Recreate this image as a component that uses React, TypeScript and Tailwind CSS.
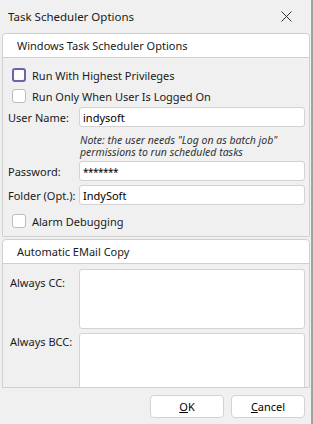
import React from 'react';

const font = { fontFamily: '"Noto Sans", "Open Sans", sans-serif' };

const CheckBox = ({ focused = false }: { focused?: boolean }) => (
    <div
        className={
            focused
                ? 'w-[14px] h-[14px] rounded-[3px] bg-white border-2 border-[#6f62a8] shrink-0'
                : 'w-[14px] h-[14px] rounded-[3px] bg-white border border-[#bdbdbd] shrink-0'
        }
    />
);

const Field = ({ value, small = false }: { value: string; small?: boolean }) => (
    <div
        className={
            small
                ? 'w-[226px] h-[20px] bg-white border border-[#d3d3d3] rounded-[3px] pl-[3px] pt-[2px] flex items-center text-[10px] tracking-[-0.5px] text-black leading-none'
                : 'w-[226px] h-[20px] bg-white border border-[#d3d3d3] rounded-[3px] pl-[3px] flex items-center text-[11px] text-black leading-none'
        }
    >
        {value}
    </div>
);

export default function App() {
    return (
        <div
            className="w-[313px] h-[424px] bg-[#f0f0f0] border-r-2 border-[#a3a3a3] flex flex-col text-[11px] leading-[15px] text-[#1a1a1a] overflow-hidden"
            style={font}
        >
            {/* title */}
            <div className="h-[33px] shrink-0 flex items-center justify-between pl-[8px] pr-[19px]">
                <span className="text-[11.5px]">Task Scheduler Options</span>
                <svg width="11" height="11" viewBox="0 0 11 11" className="text-[#333]">
                    <path d="M0.5 0.5L10.5 10.5M10.5 0.5L0.5 10.5" stroke="currentColor" strokeWidth="1" />
                </svg>
            </div>

            <div className="pl-[2px] pr-[1px] flex flex-col shrink-0">
                {/* Windows Task Scheduler Options */}
                <div className="border border-[#d0d0d0] rounded-t-[4px] flex flex-col">
                    <div className="h-[23px] bg-white rounded-t-[4px] border-b border-[#d0d0d0] pl-[14px] flex items-center box-content">
                        Windows Task Scheduler Options
                    </div>
                    <div className="flex flex-col pb-[8px]">
                        <div className="mt-[10px] h-[14px] flex items-center gap-[6px] pl-[9px]">
                            <CheckBox focused />
                            <span className="whitespace-nowrap">Run With Highest Privileges</span>
                        </div>
                        <div className="mt-[7px] h-[14px] flex items-center gap-[6px] pl-[9px]">
                            <CheckBox />
                            <span className="whitespace-nowrap">Run Only When User Is Logged On</span>
                        </div>
                        <div className="mt-[4px] h-[20px] flex items-center pl-[5px]">
                            <span className="w-[71px] whitespace-nowrap">User Name:</span>
                            <Field value="indysoft" />
                        </div>
                        <div className="mt-[7px] h-[24px] pl-[77px] italic text-[10.5px] text-[#333] flex flex-col">
                            <span className="h-[12px] leading-[12px] whitespace-nowrap">Note: the user needs "Log on as batch job"</span>
                            <span className="h-[12px] leading-[12px] whitespace-nowrap">permissions to run scheduled tasks</span>
                        </div>
                        <div className="mt-[3px] h-[20px] flex items-center pl-[5px]">
                            <span className="w-[71px] whitespace-nowrap">Password:</span>
                            <Field value="*******" small />
                        </div>
                        <div className="mt-[4px] h-[20px] flex items-center pl-[5px]">
                            <span className="w-[71px] whitespace-nowrap">Folder (Opt.):</span>
                            <Field value="IndySoft" />
                        </div>
                        <div className="mt-[9px] h-[14px] flex items-center gap-[6px] pl-[9px]">
                            <CheckBox />
                            <span className="whitespace-nowrap">Alarm Debugging</span>
                        </div>
                    </div>
                </div>

                {/* Automatic EMail Copy */}
                <div className="mt-[2px] h-[149px] border border-[#d0d0d0] rounded-t-[4px] flex flex-col overflow-hidden">
                    <div className="h-[23px] bg-white rounded-t-[4px] border-b border-[#d0d0d0] pl-[14px] flex items-center box-content shrink-0">
                        Automatic EMail Copy
                    </div>
                    <div className="flex flex-col pl-[7px]">
                        <div className="mt-[5px] flex items-start">
                            <span className="w-[69px] pt-[6px] whitespace-nowrap">Always CC:</span>
                            <div className="w-[226px] h-[60px] bg-white border border-[#d3d3d3] rounded-[3px]" />
                        </div>
                        <div className="mt-[4px] flex items-start">
                            <span className="w-[69px] pt-[1px] whitespace-nowrap">Always BCC:</span>
                            <div className="w-[226px] h-[80px] bg-white border border-[#d3d3d3] rounded-[3px] shrink-0" />
                        </div>
                    </div>
                </div>
            </div>

            {/* buttons */}
            <div className="mt-[7px] shrink-0 flex justify-end gap-[7px] pr-[6px]">
                <button className="w-[74px] h-[23px] bg-white border border-[#d3d3d3] rounded-[4px] text-[11px] text-black">
                    <u>O</u>K
                </button>
                <button className="w-[74px] h-[23px] bg-white border border-[#d3d3d3] rounded-[4px] text-[11px] text-black">
                    <u>C</u>ancel
                </button>
            </div>
        </div>
    );
}
